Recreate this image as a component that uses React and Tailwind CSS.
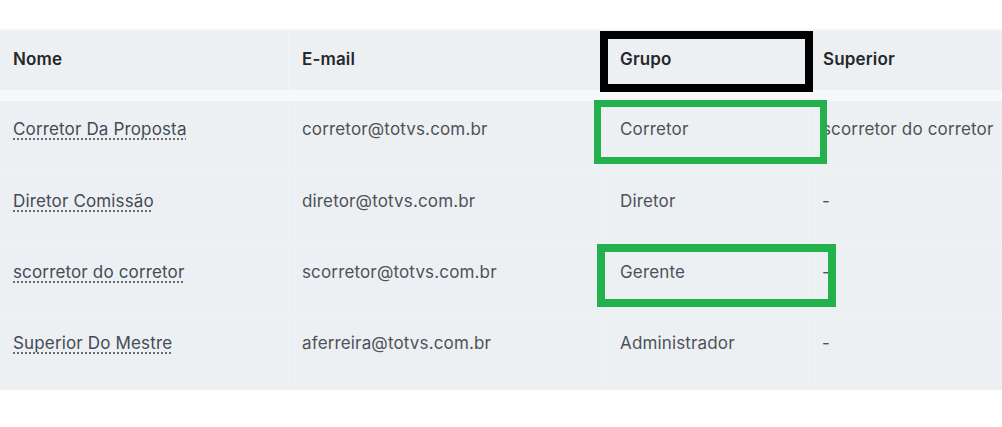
import React from "react";

const rows = [
  { nome: "Corretor Da Proposta", email: "corretor@totvs.com.br", grupo: "Corretor", superior: "scorretor do corretor" },
  { nome: "Diretor Comissão", email: "diretor@totvs.com.br", grupo: "Diretor", superior: "-" },
  { nome: "scorretor do corretor", email: "scorretor@totvs.com.br", grupo: "Gerente", superior: "-" },
  { nome: "Superior Do Mestre", email: "aferreira@totvs.com.br", grupo: "Administrador", superior: "-" },
];

const cols = "grid grid-cols-[288px_317px_203px_1fr]";

function App() {
  return (
    <div className="relative h-[427px] w-[1002px] overflow-hidden bg-white font-['Inter',sans-serif] tracking-[0.15px]">
      <div className="h-[29px]" />
      <div className="h-[2px] bg-[#f3f5f6]" />

      <div className="bg-[#edf0f2]">
        {/* header */}
        <div className={`${cols} h-[59px] text-[17px] font-semibold text-[#25282c]`}>
          <div className="flex items-center pl-[13px] pb-[2px]">Nome</div>
          <div className="flex items-center border-l border-[#f2f4f5] pl-[13px] pb-[2px]">E-mail</div>
          <div className="flex items-center border-l border-[#f2f4f5] pl-[14px] pb-[2px]">Grupo</div>
          <div className="flex items-center border-l border-[#f2f4f5] pl-[14px] pb-[2px]">Superior</div>
        </div>
        <div className="h-[11px] bg-[#f7f8f9]" />

        {/* body */}
        <div className="pb-[5px] text-[17px] text-[#4d525a]">
          {rows.map((r, i) => (
            <div
              key={r.email}
              className={`${cols} h-[71px] ${i > 0 ? "border-t border-[#f0f2f4]" : ""}`}
            >
              <div className="pl-[13px] pt-[18px] leading-5">
                <a
                  href="#"
                  className="text-[#434b57] underline decoration-dotted decoration-[#555] underline-offset-[4px]"
                >
                  {r.nome}
                </a>
              </div>
              <div className="border-l border-[#f0f2f4] pl-[13px] pt-[18px] leading-5">{r.email}</div>
              <div className="border-l border-[#f0f2f4] pl-[14px] pt-[18px] leading-5">{r.grupo}</div>
              <div className="whitespace-nowrap border-l border-[#f0f2f4] pl-[13px] pt-[18px] leading-5">
                {r.superior}
              </div>
            </div>
          ))}
        </div>
      </div>

      {/* annotations */}
      <div className="absolute left-[600px] top-[31px] h-[61px] w-[213px] border-[8px] border-black" />
      <div className="absolute left-[594px] top-[100px] h-[64px] w-[233px] border-[7px] border-[#22b14c]" />
      <div className="absolute left-[597px] top-[244px] h-[63px] w-[239px] border-[8px] border-[#22b14c]" />
    </div>
  );
}

export default App;
